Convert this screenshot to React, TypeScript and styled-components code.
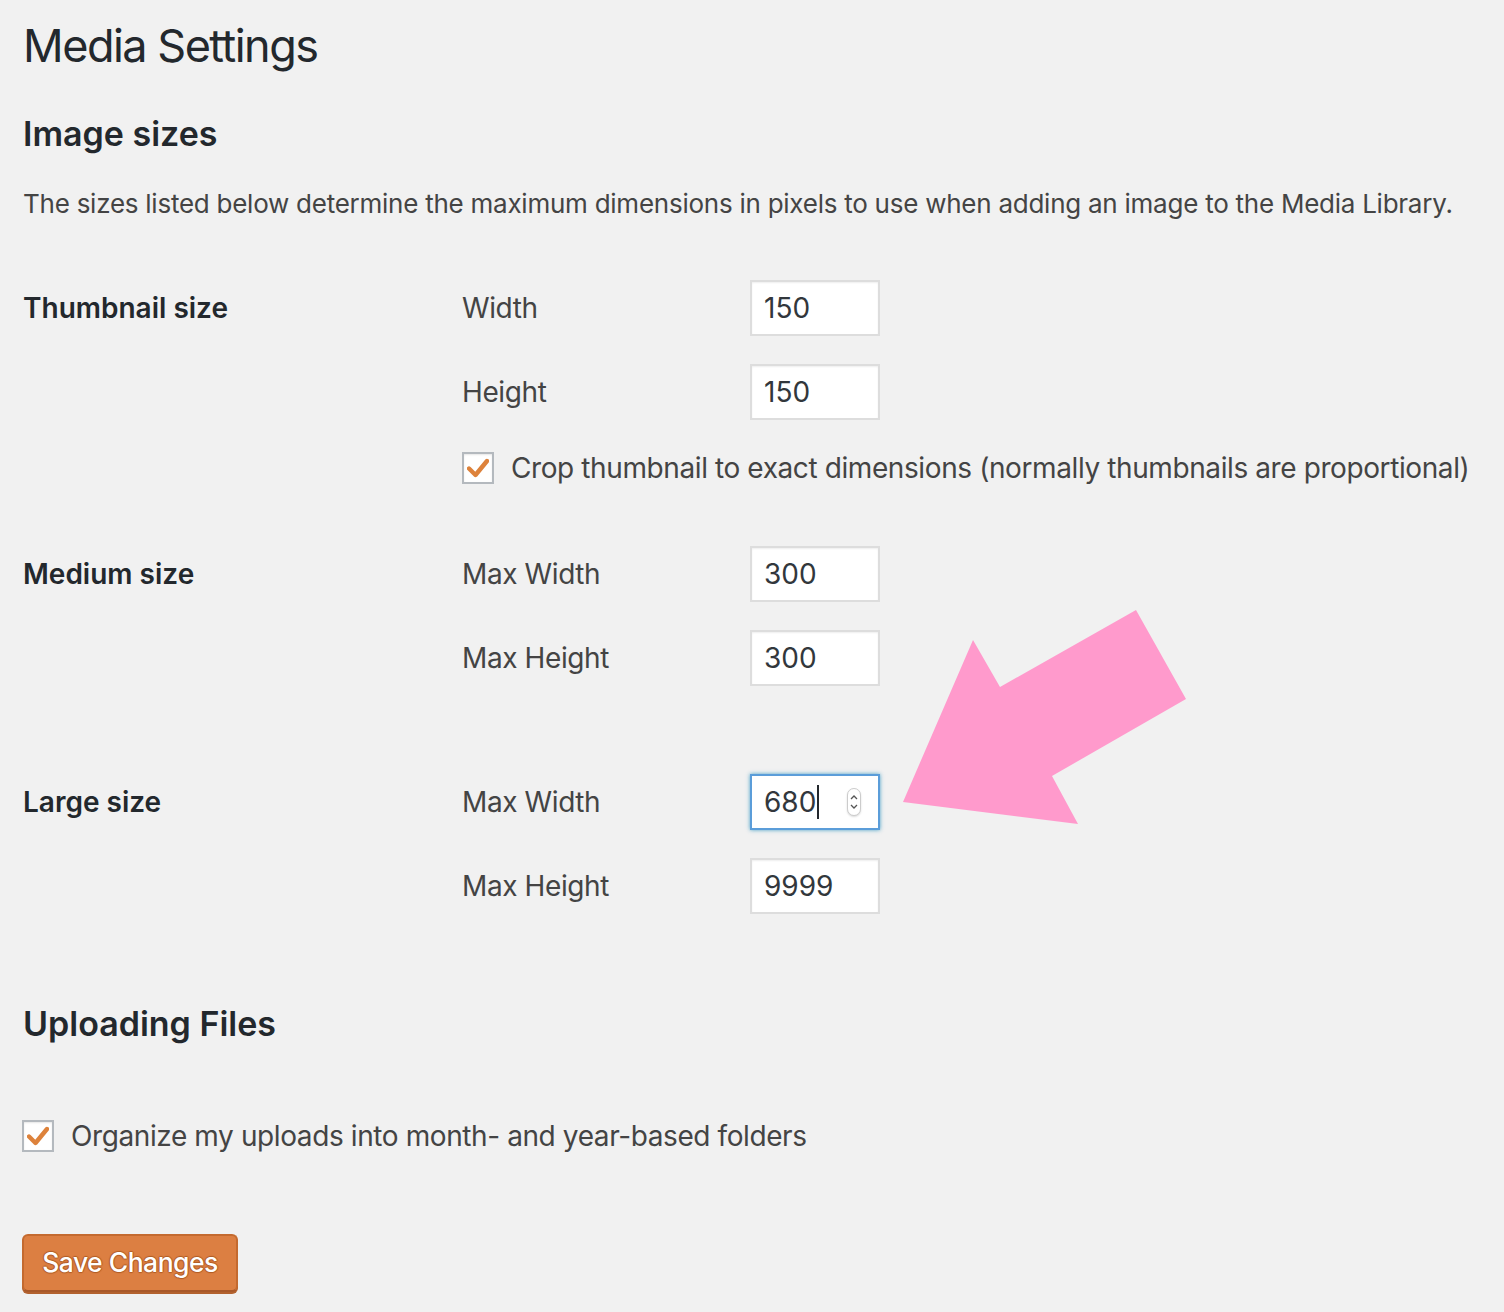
import styled, { createGlobalStyle, css } from 'styled-components';

const GlobalStyle = createGlobalStyle`
  html, body {
    margin: 0;
    padding: 0;
    background: #f1f1f1;
  }
  body {
    font-family: Inter, 'Noto Sans', 'Liberation Sans', sans-serif;
    color: #444;
  }
`;

const Page = styled.div`
  position: relative;
  min-height: 1312px;
  padding: 18px 0 0 23px;
  box-sizing: border-box;
`;

const Title = styled.h1`
  margin: 0;
  font-size: 45px;
  line-height: 56px;
  font-weight: 400;
  letter-spacing: -1.5px;
  color: #23282d;
`;

const SectionTitle = styled.h2<{ $gap: number }>`
  margin: ${(p) => p.$gap}px 0 0;
  font-size: 34px;
  line-height: 44px;
  font-weight: 600;
  color: #23282d;
`;

const Description = styled.p`
  margin: 28px 0 0;
  font-size: 26px;
  line-height: 40px;
  letter-spacing: -0.25px;
`;

const SizeRow = styled.div<{ $gap: number }>`
  display: grid;
  grid-template-columns: 439px 1fr;
  margin-top: ${(p) => p.$gap}px;
`;

const RowLabel = styled.div`
  font-size: 28px;
  line-height: 56px;
  font-weight: 600;
  color: #23282d;
`;

const Fields = styled.div`
  display: flex;
  flex-direction: column;
  gap: 28px;
`;

const Field = styled.div`
  display: grid;
  grid-template-columns: 288px 130px;
  align-items: center;
`;

const FieldLabel = styled.label`
  font-size: 28px;
  line-height: 56px;
  letter-spacing: -0.4px;
`;

const NumberBox = styled.div<{ $focused?: boolean }>`
  position: relative;
  box-sizing: border-box;
  height: 56px;
  padding: 0 12px;
  display: flex;
  align-items: center;
  background: #fff;
  font-size: 28px;
  color: #32373c;
  border: 2px solid #ddd;
  box-shadow: inset 0 1px 2px rgba(0, 0, 0, 0.07);
  ${(p) =>
    p.$focused &&
    css`
      border-color: #5b9dd9;
      box-shadow: 0 0 4px rgba(30, 140, 190, 0.8);
    `}
`;

const Caret = styled.span`
  display: inline-block;
  width: 2px;
  height: 34px;
  margin-left: 1px;
  background: #23282d;
`;

const Spinner = styled.span`
  position: absolute;
  right: 17px;
  top: 12px;
  width: 14px;
  height: 28px;
  box-sizing: border-box;
  border: 1px solid #ccc;
  border-radius: 7px;
  background: #fff;
  box-shadow: 0 1px 2px rgba(0, 0, 0, 0.15);
  display: flex;
  align-items: center;
  justify-content: center;
`;

const CheckRow = styled.label<{ $gap: number; $shift?: number }>`
  display: flex;
  align-items: center;
  gap: 17px;
  margin-top: ${(p) => p.$gap}px;
  margin-left: ${(p) => p.$shift ?? 0}px;
  font-size: 28px;
  line-height: 32px;
  letter-spacing: -0.4px;
`;

const CheckBox = styled.span`
  box-sizing: border-box;
  width: 32px;
  height: 32px;
  flex: none;
  display: flex;
  align-items: center;
  justify-content: center;
  background: #fff;
  border: 2px solid #b4b9be;
  box-shadow: inset 0 1px 2px rgba(0, 0, 0, 0.1);
`;

const SaveButton = styled.button`
  margin-top: 82px;
  margin-left: -1px;
  box-sizing: border-box;
  width: 216px;
  height: 58px;
  padding: 0 0 2px;
  font-family: inherit;
  font-size: 26.5px;
  font-weight: 500;
  letter-spacing: -0.5px;
  color: #fff;
  background: #dc7f42;
  border: 2px solid #c46a2f;
  border-bottom-color: #a9592a;
  border-radius: 6px;
  box-shadow: 0 2px 0 #b3622f;
  text-shadow: 0 -1px 1px #b05c25, 1px 0 1px #b05c25, 0 1px 1px #b05c25, -1px 0 1px #b05c25;
  cursor: pointer;
`;

const Arrow = styled.svg`
  position: absolute;
  left: 0;
  top: 0;
  pointer-events: none;
`;

const Check = () => (
  <svg width="22" height="20" viewBox="0 0 22 20">
    <path d="M2 10.5 L8.5 17 L20 3" fill="none" stroke="#dd823b" strokeWidth="4.4" strokeLinecap="round" strokeLinejoin="round" />
  </svg>
);

type FieldSpec = { label: string; value: string; focused?: boolean };

const NumberField = ({ label, value, focused }: FieldSpec) => (
  <Field>
    <FieldLabel>{label}</FieldLabel>
    <NumberBox $focused={focused}>
      {value}
      {focused && <Caret />}
      {focused && (
        <Spinner>
          <svg width="8" height="18" viewBox="0 0 8 18">
            <path d="M1 6 L4 3 L7 6 M1 12 L4 15 L7 12" fill="none" stroke="#555" strokeWidth="1.3" />
          </svg>
        </Spinner>
      )}
    </NumberBox>
  </Field>
);

const App = () => (
  <Page>
    <GlobalStyle />
    <Title>Media Settings</Title>
    <SectionTitle $gap={38}>Image sizes</SectionTitle>
    <Description>
      The sizes listed below determine the maximum dimensions in pixels to use when adding an image to the Media Library.
    </Description>

    <SizeRow $gap={56}>
      <RowLabel>Thumbnail size</RowLabel>
      <div>
        <Fields>
          <NumberField label="Width" value="150" />
          <NumberField label="Height" value="150" />
        </Fields>
        <CheckRow $gap={32}>
          <CheckBox>
            <Check />
          </CheckBox>
          Crop thumbnail to exact dimensions (normally thumbnails are proportional)
        </CheckRow>
      </div>
    </SizeRow>

    <SizeRow $gap={62}>
      <RowLabel>Medium size</RowLabel>
      <Fields>
        <NumberField label="Max Width" value="300" />
        <NumberField label="Max Height" value="300" />
      </Fields>
    </SizeRow>

    <SizeRow $gap={88}>
      <RowLabel>Large size</RowLabel>
      <Fields>
        <NumberField label="Max Width" value="680" focused />
        <NumberField label="Max Height" value="9999" />
      </Fields>
    </SizeRow>

    <SectionTitle $gap={88}>Uploading Files</SectionTitle>
    <CheckRow $gap={74} $shift={-1}>
      <CheckBox>
        <Check />
      </CheckBox>
      Organize my uploads into month- and year-based folders
    </CheckRow>

    <SaveButton type="button">Save Changes</SaveButton>

    <Arrow width="1504" height="1312" viewBox="0 0 1504 1312">
      <polygon
        points="1136,610 1186,699 1052,776 1078,824 903,802 973,640 1000,687"
        fill="#ff9acc"
      />
    </Arrow>
  </Page>
);

export default App;
